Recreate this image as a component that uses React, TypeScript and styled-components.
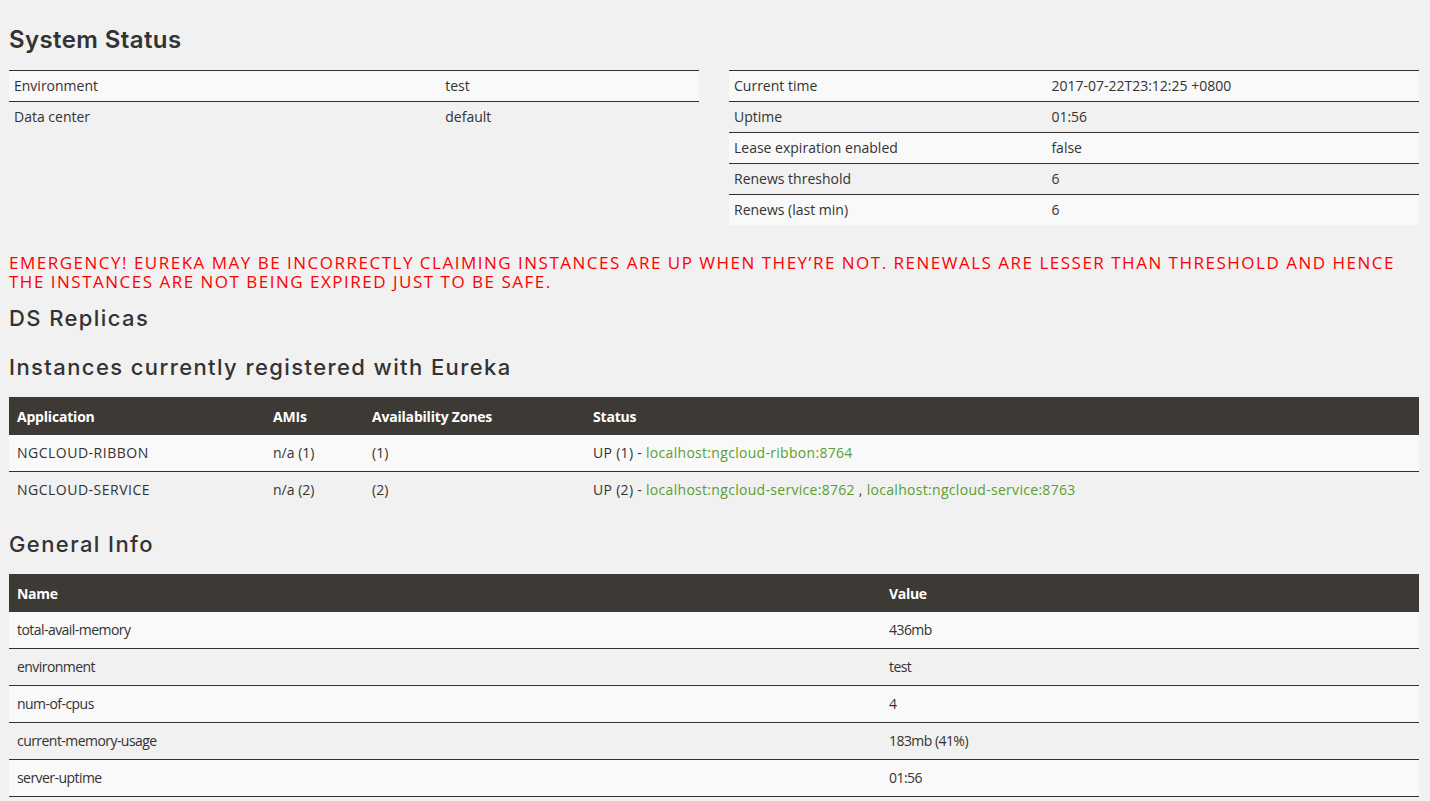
import React from 'react';
import styled, { createGlobalStyle } from 'styled-components';

const GlobalStyle = createGlobalStyle`
  body {
    margin: 0;
    background: #f1f1f1;
    color: #333;
    font-family: "Open Sans", "Noto Sans", Arial, sans-serif;
    font-size: 14px;
  }
`;

const systemLeft = [
  ['Environment', 'test'],
  ['Data center', 'default'],
];

const systemRight = [
  ['Current time', '2017-07-22T23:12:25 +0800'],
  ['Uptime', '01:56'],
  ['Lease expiration enabled', 'false'],
  ['Renews threshold', '6'],
  ['Renews (last min)', '6'],
];

const instances = [
  {
    app: 'NGCLOUD-RIBBON',
    amis: 'n/a (1)',
    zones: '(1)',
    status: 'UP (1)',
    links: ['localhost:ngcloud-ribbon:8764'],
  },
  {
    app: 'NGCLOUD-SERVICE',
    amis: 'n/a (2)',
    zones: '(2)',
    status: 'UP (2)',
    links: ['localhost:ngcloud-service:8762', 'localhost:ngcloud-service:8763'],
  },
];

const generalInfo = [
  ['total-avail-memory', '436mb'],
  ['environment', 'test'],
  ['num-of-cpus', '4'],
  ['current-memory-usage', '183mb (41%)'],
  ['server-uptime', '01:56'],
];

const App = () => {
  return (
    <Page>
      <GlobalStyle />
      <Title>System Status</Title>
      <Columns>
        <KvTable>
          <tbody>
            {systemLeft.map(([k, v]) => (
              <KvRow key={k}>
                <KvCell $width="62.5%">{k}</KvCell>
                <KvCell>{v}</KvCell>
              </KvRow>
            ))}
          </tbody>
        </KvTable>
        <KvTable>
          <tbody>
            {systemRight.map(([k, v]) => (
              <KvRow key={k}>
                <KvCell $width="46%">{k}</KvCell>
                <KvCell>{v}</KvCell>
              </KvRow>
            ))}
          </tbody>
        </KvTable>
      </Columns>

      <Emergency>
        EMERGENCY! EUREKA MAY BE INCORRECTLY CLAIMING INSTANCES ARE UP WHEN THEY’RE NOT.
        RENEWALS ARE LESSER THAN THRESHOLD AND HENCE THE INSTANCES ARE NOT BEING EXPIRED
        JUST TO BE SAFE.
      </Emergency>

      <SubTitle $top={13}>DS Replicas</SubTitle>

      <SubTitle $top={21}>Instances currently registered with Eureka</SubTitle>
      <DataTable>
        <colgroup>
          <col style={{ width: 256 }} />
          <col style={{ width: 99 }} />
          <col style={{ width: 221 }} />
          <col />
        </colgroup>
        <thead>
          <tr>
            <HeadCell>Application</HeadCell>
            <HeadCell>AMIs</HeadCell>
            <HeadCell>Availability Zones</HeadCell>
            <HeadCell>Status</HeadCell>
          </tr>
        </thead>
        <tbody>
          {instances.map((row) => (
            <DataRow key={row.app}>
              <DataCell $spacing={0.5}>{row.app}</DataCell>
              <DataCell>{row.amis}</DataCell>
              <DataCell>{row.zones}</DataCell>
              <DataCell $spacing={0.3}>
                {row.status} -{' '}
                {row.links.map((l, i) => (
                  <React.Fragment key={l}>
                    {i > 0 && ' , '}
                    <Link href="#">{l}</Link>
                  </React.Fragment>
                ))}
              </DataCell>
            </DataRow>
          ))}
        </tbody>
      </DataTable>

      <SubTitle $top={22}>General Info</SubTitle>
      <DataTable $closed>
        <colgroup>
          <col style={{ width: 872 }} />
          <col />
        </colgroup>
        <thead>
          <tr>
            <HeadCell $spacing={-0.3}>Name</HeadCell>
            <HeadCell $spacing={-0.3}>Value</HeadCell>
          </tr>
        </thead>
        <tbody>
          {generalInfo.map(([k, v]) => (
            <DataRow key={k}>
              <DataCell $spacing={-0.55}>{k}</DataCell>
              <DataCell $spacing={-0.55}>{v}</DataCell>
            </DataRow>
          ))}
        </tbody>
      </DataTable>
    </Page>
  );
};

export default App;

const Page = styled.div`
  padding: 24px 11px 40px 9px;
`;

const Title = styled.h1`
  margin: 0 0 14px;
  font-family: Inter, "Open Sans", sans-serif;
  font-size: 24px;
  font-weight: 600;
  line-height: 32px;
  letter-spacing: 0.4px;
  color: #333;
`;

const SubTitle = styled.h2<{ $top?: number }>`
  margin: ${({ $top }) => $top ?? 12}px 0 16px;
  font-family: Inter, "Open Sans", sans-serif;
  font-size: 22px;
  font-weight: 500;
  line-height: 28px;
  letter-spacing: 1.4px;
  color: #333;
`;

const Columns = styled.div`
  display: grid;
  grid-template-columns: 1fr 1fr;
  gap: 30px;
  align-items: start;
`;

const KvTable = styled.table`
  width: 100%;
  border-collapse: collapse;
`;

const KvRow = styled.tr`
  border-top: 1px solid #333;
  &:nth-child(odd) {
    background: #f9f9f9;
  }
`;

const KvCell = styled.td<{ $width?: string }>`
  width: ${({ $width }) => $width ?? 'auto'};
  height: 30px;
  padding: 0 5px;
  font-size: 14px;
  line-height: 20px;
  vertical-align: middle;
  color: #333;
`;

const Emergency = styled.h3`
  margin: 28px 0 0;
  font-family: "Open Sans", "Noto Sans", sans-serif;
  font-size: 17px;
  font-weight: 400;
  line-height: 19px;
  letter-spacing: 1.5px;
  color: #ff0000;
`;

const DataTable = styled.table<{ $closed?: boolean }>`
  width: 100%;
  table-layout: fixed;
  border-collapse: collapse;
  border-bottom: ${({ $closed }) => ($closed ? '1px solid #333' : 'none')};
`;

const HeadCell = styled.th<{ $spacing?: number }>`
  box-sizing: border-box;
  height: 38px;
  padding: 0 8px;
  background: #3d3934;
  color: #fff;
  font-size: 14px;
  font-weight: 700;
  letter-spacing: ${({ $spacing }) => $spacing ?? -0.2}px;
  text-align: left;
  vertical-align: middle;
`;

const DataRow = styled.tr`
  border-top: 1px solid #333;
  & > td {
    height: 37px;
  }
  &:first-child {
    border-top: none;
  }
  &:first-child > td {
    height: 36px;
  }
  &:nth-child(odd) {
    background: #f9f9f9;
  }
`;

const DataCell = styled.td<{ $spacing?: number }>`
  box-sizing: border-box;
  padding: 0 8px;
  font-size: 14px;
  letter-spacing: ${({ $spacing }) => $spacing ?? 0}px;
  vertical-align: middle;
  color: #333;
`;

const Link = styled.a`
  color: #5a9e2f;
  text-decoration: none;
`;
